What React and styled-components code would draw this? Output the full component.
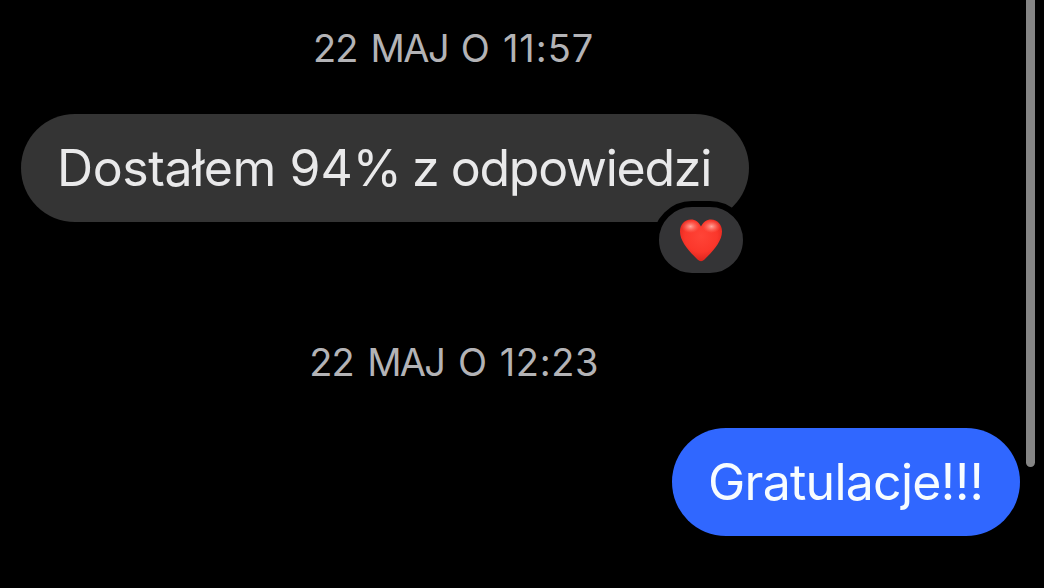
import styled, { createGlobalStyle } from 'styled-components';

const GlobalStyle = createGlobalStyle`
    body {
        margin: 0;
        background: #000;
        overflow: hidden;
    }
`

const Screen = styled.div`
    display: flex;
    justify-content: space-between;
    width: 1044px;
    height: 588px;
    box-sizing: border-box;
    padding-right: 9px;
    overflow: hidden;
    background: #000;
    font-family: Inter, "Liberation Sans", sans-serif;
`

const Thread = styled.main`
    display: flex;
    flex-direction: column;
    width: 999px;
    padding: 26px 0 0 21px;
`

const Timestamp = styled.time`
    height: 46px;
    padding-left: ${({ $indent }) => $indent}px;
    line-height: 45px;
    font-size: 38px;
    color: #b3b3b6;
    white-space: nowrap;
`

const Word = styled.span`
    margin-left: ${({ $shift }) => $shift || 0}px;
    letter-spacing: ${({ $spacing }) => $spacing || 0}px;
`

const Bubble = styled.div`
    position: relative;
    align-self: ${({ $mine }) => ($mine ? 'flex-end' : 'flex-start')};
    width: ${({ $mine }) => ($mine ? '348px' : '728px')};
    height: 108px;
    margin: ${({ $mine }) => ($mine ? '42px 0 0' : '42px 0 118px')};
    padding-left: 36px;
    box-sizing: border-box;
    border-radius: 54px;
    background: ${({ $mine }) => ($mine ? '#3067ff' : '#343434')};
    color: ${({ $mine }) => ($mine ? '#f7fcff' : '#e9e9ea')};
    font-size: 50px;
    line-height: 108px;
    white-space: nowrap;
`

const Reaction = styled.span`
    position: absolute;
    right: 0;
    bottom: -57px;
    display: flex;
    align-items: center;
    justify-content: center;
    width: 84px;
    height: 66px;
    border: 6px solid #000;
    border-radius: 39px;
    background: #343436;

    svg {
        display: block;
    }
`

const Scrollbar = styled.div`
    width: 9px;
    height: 467px;
    border-radius: 0 0 5px 5px;
    background: #858585;
`

const Heart = () => (
    <svg width="44" height="44" viewBox="0 0 44 44">
        <defs>
            <radialGradient id="heart" gradientUnits="userSpaceOnUse" cx="22" cy="18" r="27">
                <stop offset="0" stopColor="#ff4437" />
                <stop offset="0.6" stopColor="#fb372b" />
                <stop offset="1" stopColor="#d5201a" />
            </radialGradient>
            <radialGradient id="shine">
                <stop offset="0" stopColor="#ffb3aa" stopOpacity="0.9" />
                <stop offset="1" stopColor="#ff7a6c" stopOpacity="0" />
            </radialGradient>
        </defs>
        <path
            d="M22 8.5C19.8 4 16.2 1.5 12 1.5C5.4 1.5 1 6.6 1 13.5C1 23.5 10 33 18.5 41.5Q22 45 25.5 41.5C34 33 43 23.5 43 13.5C43 6.6 38.6 1.5 32 1.5C27.8 1.5 24.2 4 22 8.5Z"
            fill="url(#heart)"
        />
        <ellipse cx="11.5" cy="8.5" rx="9" ry="6.5" fill="url(#shine)" />
        <ellipse cx="32.5" cy="8.5" rx="9" ry="6.5" fill="url(#shine)" />
    </svg>
)

export default function App() {
    return (
        <>
            <GlobalStyle />
            <Screen>
                <Thread>
                    <Timestamp $indent={292}>
                        <Word $spacing={-1}>22</Word>{' '}
                        <Word $shift={2.5} $spacing={-1.6}>MAJ</Word>{' '}
                        <Word $shift={2.2}>O</Word>{' '}
                        <Word $shift={2.3} $spacing={1}>11:57</Word>
                    </Timestamp>
                    <Bubble>
                        <Word $spacing={-0.4}>Dostałem</Word>{' '}
                        <Word $shift={-0.5}>94%</Word>{' '}
                        <Word $shift={-4}>z</Word>{' '}
                        <Word $shift={-3} $spacing={-1.25}>odpowiedzi</Word>
                        <Reaction><Heart /></Reaction>
                    </Bubble>
                    <Timestamp $indent={288.3}>
                        <Word $spacing={-1}>22</Word>{' '}
                        <Word $shift={3} $spacing={-1.8}>MAJ</Word>{' '}
                        <Word $shift={3.2}>O</Word>{' '}
                        <Word $shift={2} $spacing={0.6}>12:23</Word>
                    </Timestamp>
                    <Bubble $mine>
                        <Word $spacing={-0.75}>Gratulacje</Word>
                        <Word>!!!</Word>
                    </Bubble>
                </Thread>
                <Scrollbar />
            </Screen>
        </>
    )
}
